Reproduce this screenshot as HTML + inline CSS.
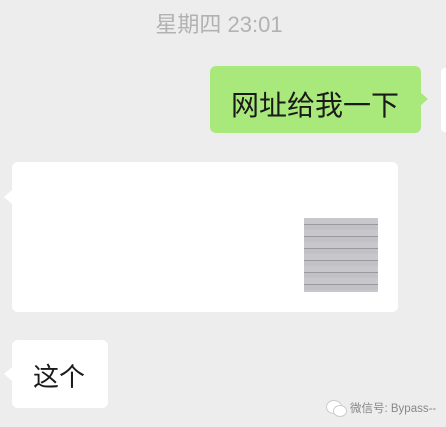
<!DOCTYPE html><html><head><meta charset="utf-8"><style>
body{margin:0;width:446px;height:427px;background:#ededed;position:relative;overflow:hidden;font-family:"Liberation Sans","Noto Sans CJK SC",sans-serif}
.a{position:absolute}
</style></head><body>
<div class="a" style="left:0;width:438px;top:7px;text-align:center;font-size:22px;color:#b2b2b2">星期四 23:01</div>
<div class="a" style="left:210px;top:66px;width:211px;height:67px;background:#a9e87a;border-radius:6px"></div>
<div class="a" style="left:420px;top:92px;width:0;height:0;border-top:7px solid transparent;border-bottom:7px solid transparent;border-left:8px solid #a9e87a"></div>
<div class="a" style="left:231px;top:84px;font-size:28px;color:#1a1a1a;letter-spacing:0px">网址给我一下</div>
<div class="a" style="left:441px;top:68px;width:10px;height:64px;background:#fff;border-radius:4px"></div>
<div class="a" style="left:12px;top:162px;width:386px;height:150px;background:#fff;border-radius:6px"></div>
<div class="a" style="left:4px;top:190px;width:0;height:0;border-top:7px solid transparent;border-bottom:7px solid transparent;border-right:8px solid #fff"></div>
<div class="a" style="left:304px;top:218px;width:74px;height:74px;background:repeating-linear-gradient(180deg,#c8c7cc 0 6px,#9a98a0 6px 7px,#c2c1c6 7px 12px);"></div>
<div class="a" style="left:12px;top:340px;width:96px;height:68px;background:#fff;border-radius:6px"></div>
<div class="a" style="left:4px;top:367px;width:0;height:0;border-top:7px solid transparent;border-bottom:7px solid transparent;border-right:8px solid #fff"></div>
<div class="a" style="left:33px;top:357px;font-size:26px;color:#1a1a1a">这个</div>
<div class="a" style="left:326px;top:400px;width:14px;height:12px;border-radius:50%;background:#fff;border:1px solid #ccc"></div>
<div class="a" style="left:333px;top:405px;width:12px;height:10px;border-radius:50%;background:#fff;border:1px solid #ccc"></div>
<div class="a" style="left:350px;top:400px;font-size:11.5px;color:#888">微信号: Bypass--</div>
</body></html>
